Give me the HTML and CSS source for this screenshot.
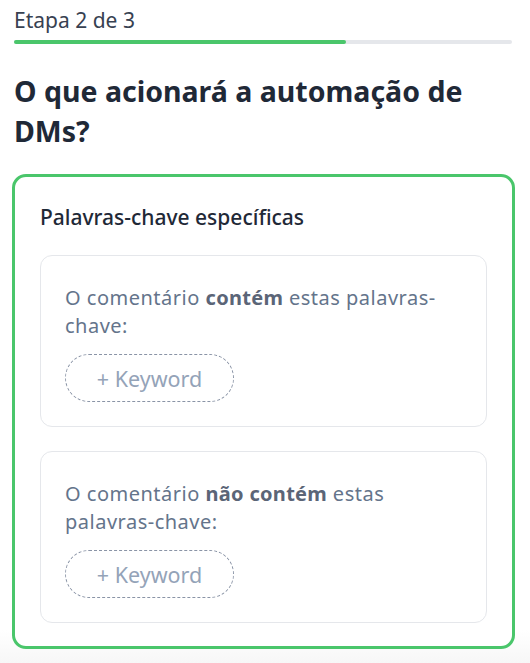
FILE: index.html
```html
<!DOCTYPE html>
<html lang="pt">
<head>
<meta charset="utf-8">
<link rel="stylesheet" href="styles.css">
</head>
<body>
<div class="page">
  <div class="step">Etapa 2 de 3</div>
  <div class="progress"><div class="progress-fill"></div></div>
  <h1 class="title">O que acionará a automação de DMs?</h1>
  <div class="option">
    <div class="option-title">Palavras-chave específicas</div>
    <div class="rule">
      <p class="rule-text">O comentário <strong>contém</strong> estas palavras-chave:</p>
      <button class="kw">+ Keyword</button>
    </div>
    <div class="rule">
      <p class="rule-text">O comentário <strong>não contém</strong> estas palavras-chave:</p>
      <button class="kw">+ Keyword</button>
    </div>
  </div>
</div>
</body>
</html>
```
FILE: styles.css
```css
* { box-sizing: border-box; }
html, body { margin: 0; padding: 0; }
body {
  font-family: "Noto Sans", "Open Sans", sans-serif;
  color: #1f2937;
  min-height: 663px;
  background: linear-gradient(to bottom, #ffffff 0, #ffffff 630px, #f7f7f7 663px);
}
.page { padding: 6px 18px 0 14px; }
.step { font-size: 21px; line-height: 28px; color: #374151; }
.progress { height: 4px; background: #e5e7eb; border-radius: 2px; margin-top: 6px; }
.progress-fill { width: 66.6%; height: 100%; background: #4ac66b; border-radius: 2px; }
.title { font-size: 28.5px; font-weight: 700; line-height: 40px; margin: 27px 0 23px 0; color: #1f2937; }
.option { border: 3px solid #4ac66b; border-radius: 14px; padding: 25px 25px 23px 25px; margin-left: -2px; margin-right: -3px; background: #fff; }
.option-title { font-size: 21px; font-weight: 500; line-height: 30px; color: #1f2937; margin-bottom: 23px; }
.rule { border: 1px solid #e5e7eb; border-radius: 12px; padding: 28px 24px 24px 24px; }
.rule + .rule { margin-top: 24px; }
.rule-text { margin: 0; font-size: 20px; letter-spacing: 0.5px; line-height: 28px; color: #64748b; }
.rule-text strong { font-weight: 700; color: #5b6577; letter-spacing: 0.3px; }
.kw { margin-top: 14px; width: 169px; height: 48px; border: 1px dashed #8a94a6; border-radius: 24px; background: #fff; font-family: inherit; font-size: 21.5px; color: #94a3b8; padding: 0; }
```
